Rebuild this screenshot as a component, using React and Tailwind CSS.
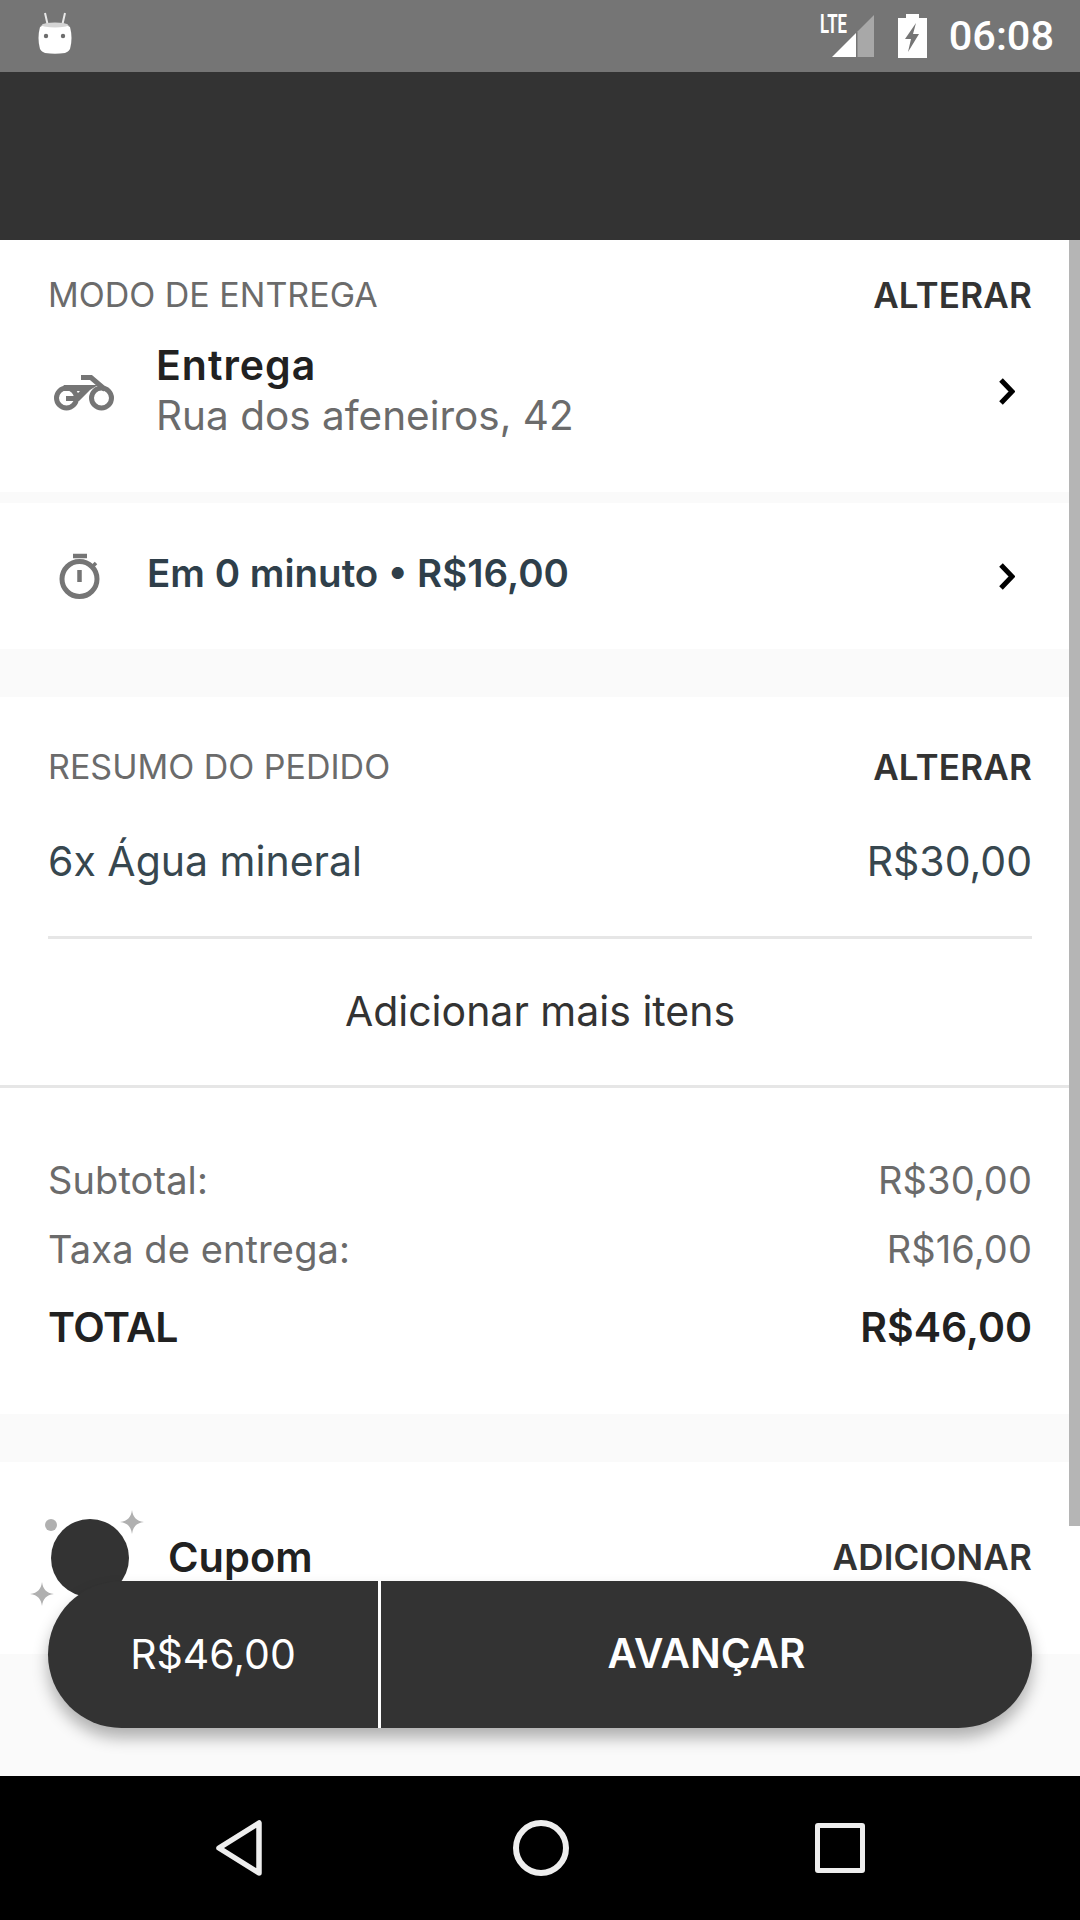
import React from "react";

function Robot() {
  return (
    <svg width="60" height="60" viewBox="0 0 60 60" className="ml-[25px] mt-[5px]">
      <path d="M20 8l2.5 11M40 8l-2.5 11" stroke="#e8e8e8" strokeWidth="2" />
      <path d="M15 22c7-5 23-5 30 0 2 7 2 15 0 22-1 2-3 3-5 4-7 1-13 1-20 0-2-1-4-2-5-4-2-7-2-15 0-22z" fill="#fff" />
      <ellipse cx="30" cy="20" rx="13" ry="2.5" fill="#d5d5d5" />
      <circle cx="21" cy="31" r="2.2" fill="#6d6d6d" />
      <circle cx="38" cy="31" r="2.2" fill="#6d6d6d" />
    </svg>
  );
}

function StatusIcons() {
  return (
    <div className="flex items-center pr-[26px]">
      <svg width="54" height="50" viewBox="0 -6 54 50" className="mt-[-7px]">
        <path d="M36 43V19L12 43z" fill="#fff" />
        <path d="M37.500 43V17.500L54 1v42z" fill="#a8a8a8" />
        <text x="0" y="19" fontFamily="Roboto, sans-serif" fontSize="25" fontWeight="700" fill="#fff" textLength="27" lengthAdjust="spacingAndGlyphs">LTE</text>
      </svg>
      <svg width="29" height="44" viewBox="0 0 29 44" className="ml-[24px]">
        <path d="M8 0h13v4h8v40H0V4h8z" fill="#fff" />
        <path d="M18 9L7 25h6l-3 13 11-18h-6l3-11z" fill="#757575" />
      </svg>
      <span className="ml-[22px] font-['Roboto',sans-serif] text-[41.500px] leading-none font-medium text-white">06:08</span>
    </div>
  );
}

function Chevron({ className }) {
  return (
    <svg width="16" height="27" viewBox="0 0 16 27" fill="none" className={className}>
      <path d="M2 2l11 11.500L2 25" stroke="#000" strokeWidth="5" />
    </svg>
  );
}

function Moto() {
  return (
    <svg width="90" height="60" viewBox="0 0 90 60" fill="none">
      <circle cx="26.500" cy="37" r="10" stroke="#757575" strokeWidth="5" />
      <circle cx="61.500" cy="37" r="10" stroke="#757575" strokeWidth="5" />
      <path d="M24 24h34l-8 5-11 11H26v-5h9l5-5H20z" fill="#757575" />
      <path d="M41 16.500h10l14 12" stroke="#757575" strokeWidth="5" />
    </svg>
  );
}

function Stopwatch() {
  return (
    <svg width="70" height="70" viewBox="0 0 70 70" fill="none">
      <circle cx="34.500" cy="38" r="17.500" stroke="#757575" strokeWidth="5" />
      <path d="M28 15h14" stroke="#757575" strokeWidth="4.500" />
      <path d="M34.500 29v12" stroke="#757575" strokeWidth="4.500" />
      <path d="M48 25l3-3" stroke="#757575" strokeWidth="3.500" />
    </svg>
  );
}

function Sparkle({ className }) {
  return (
    <svg width="24" height="24" viewBox="0 0 24 24" className={className}>
      <path d="M12 0c1 7 4 11 12 12-8 1-11 5-12 12-1-7-4-11-12-12 8-1 11-5 12-12z" fill="#b0b0b0" />
    </svg>
  );
}

function PriceRow({ label, value }) {
  return (
    <div className="flex h-[69px] items-center justify-between text-[38px] tracking-[0.1px] text-[#6b6b6b]">
      <span>{label}</span>
      <span>{value}</span>
    </div>
  );
}

export default function App() {
  return (
    <div className="flex h-[1920px] w-[1080px] flex-col overflow-hidden bg-black font-['Inter',sans-serif]">
      {/* status bar */}
      <div className="flex h-[72px] shrink-0 items-center justify-between bg-[#757575]">
        <div className="self-start"><Robot /></div>
        <StatusIcons />
      </div>
      <div className="h-[168px] shrink-0 bg-[#333333]" />

      <div className="relative h-[1536px] shrink-0 overflow-hidden bg-[#fafafa]">
        {/* modo de entrega */}
        <section className="h-[252px] bg-white px-[48px] pt-[27px]">
          <div className="flex h-[56px] items-center justify-between">
            <span className="pb-[2px] text-[34px] text-[#6b6b6b]">MODO DE ENTREGA</span>
            <span className="text-[35px] font-semibold tracking-[0.2px] text-[#333333]">ALTERAR</span>
          </div>
          <div className="mt-[17px] flex items-center justify-between pr-[17px]">
            <div className="flex items-center">
              <div className="ml-[-8px] mr-[26px]"><Moto /></div>
              <div>
                <div className="text-[41px] leading-[51px] font-semibold tracking-[1px] text-[#212121]">Entrega</div>
                <div className="text-[40.500px] leading-[50px] text-[#6b6b6b]">Rua dos afeneiros, 42</div>
              </div>
            </div>
            <Chevron className="mt-[2px]" />
          </div>
        </section>

        {/* prazo */}
        <section className="mt-[11px] flex h-[146px] items-center justify-between bg-white pl-[45px] pr-[65px]">
          <div className="flex items-center">
            <Stopwatch />
            <span className="ml-[32px] pb-[5px] text-[38.500px] font-semibold text-[#2f3f4a]">Em 0 minuto • R$16,00</span>
          </div>
          <Chevron />
        </section>

        {/* resumo */}
        <section className="mt-[48px] h-[717px] bg-white">
          <div className="px-[48px] pt-[42px]">
            <div className="flex h-[56px] items-center justify-between">
              <span className="pb-[2px] text-[34px] text-[#6b6b6b]">RESUMO DO PEDIDO</span>
              <span className="text-[35px] font-semibold tracking-[0.2px] text-[#333333]">ALTERAR</span>
            </div>
            <div className="mt-[39px] flex h-[56px] items-center justify-between text-[41px] text-[#37474f]">
              <span>6x Água mineral</span>
              <span>R$30,00</span>
            </div>
            <div className="mt-[46px] h-[3px] bg-[#e6e6e6]" />
          </div>
          <div className="flex h-[146px] items-center justify-center text-[41px] text-[#333333]">Adicionar mais itens</div>
          <div className="h-[3px] bg-[#e6e6e6]" />
          <div className="px-[48px] pt-[58px]">
            <PriceRow label="Subtotal:" value="R$30,00" />
            <PriceRow label="Taxa de entrega:" value="R$16,00" />
            <div className="mt-[14px] flex h-[60px] items-center justify-between text-[41px] font-semibold text-[#212121]">
              <span className="tracking-[-0.5px]">TOTAL</span>
              <span>R$46,00</span>
            </div>
          </div>
        </section>

        {/* cupom */}
        <section className="mt-[48px] flex h-[192px] items-start justify-between bg-white pl-[168px] pr-[48px] pt-[70px]">
          <span className="text-[41.500px] leading-[50px] font-semibold text-[#212121]">Cupom</span>
          <span className="text-[35px] leading-[50px] font-semibold tracking-[0.2px] text-[#333333]">ADICIONAR</span>
        </section>

        {/* icone do cupom */}
        <div className="absolute left-[51px] top-[1279px] h-[78px] w-[78px] rounded-full bg-[#333333]" />
        <div className="absolute left-[45px] top-[1279px] h-[12px] w-[12px] rounded-full bg-[#b0b0b0]" />
        <Sparkle className="absolute left-[120px] top-[1270px]" />
        <Sparkle className="absolute left-[30px] top-[1342px]" />

        {/* barra de avancar */}
        <div className="absolute left-[48px] top-[1341px] flex h-[147px] w-[984px] rounded-full bg-[#333333] shadow-[0_10px_16px_rgba(0,0,0,0.3)]">
          <div className="flex w-[333px] items-center justify-center border-r-[3px] border-white text-[41px] text-white">R$46,00</div>
          <div className="flex flex-1 items-center justify-center text-[40.500px] font-semibold text-white">AVANÇAR</div>
        </div>

        {/* scrollbar */}
        <div className="absolute right-0 top-0 h-[1286px] w-[11px] bg-[#b5b5b5]" />
      </div>

      {/* navegacao */}
      <div className="flex h-[144px] shrink-0 items-center justify-between bg-black pl-[213px] pr-[215px]">
        <svg width="54" height="60" viewBox="0 0 54 60" fill="none">
          <path d="M46 5v50L6 30z" stroke="#eeeeee" strokeWidth="5.500" strokeLinejoin="round" />
        </svg>
        <div className="h-[56px] w-[56px] rounded-full border-[6px] border-[#eeeeee]" />
        <div className="h-[50px] w-[50px] rounded-[3px] border-[5.500px] border-[#eeeeee]" />
      </div>
    </div>
  );
}
